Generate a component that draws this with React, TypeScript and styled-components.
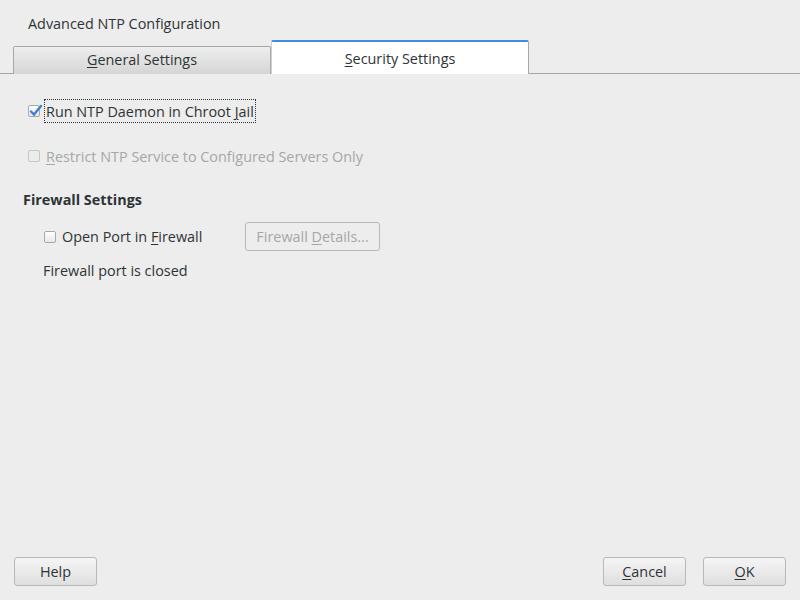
import React from 'react'
import styled, { createGlobalStyle } from 'styled-components'

const GlobalStyle = createGlobalStyle`
    html, body {
        margin: 0;
        padding: 0;
        background: #ededed;
    }
    body {
        font-family: "Open Sans", "DejaVu Sans", sans-serif;
        font-size: 14.4px;
        color: #2e3436;
    }
`

const Dialog = styled.div`
    width: 800px;
    height: 600px;
    box-sizing: border-box;
    display: flex;
    flex-direction: column;
`

const Title = styled.div`
    padding: 15px 0 0 28px;
    height: 24px;
    line-height: 18px;
`

const TabBar = styled.div`
    display: flex;
    align-items: flex-end;
    height: 34px;
    padding-left: 13px;
    border-bottom: 1px solid #a8a8a8;
`

const Tab = styled.div<{ $active?: boolean }>`
    width: 258px;
    box-sizing: border-box;
    text-align: center;
    height: ${p => (p.$active ? 34 : 28)}px;
    line-height: ${p => (p.$active ? 34 : 25)}px;
    margin-bottom: -1px;
    border: 1px solid #a8a8a8;
    border-bottom: none;
    border-radius: 2px 2px 0 0;
    background: ${p => (p.$active ? '#ffffff' : 'linear-gradient(#efeeef, #d5d5d5)')};
    ${p => p.$active && 'border-top: 2px solid #3d8ee0; border-left-color: #d0d0d0;'}
`

const Mnemonic = styled.span`
    text-decoration: underline;
    text-underline-offset: 2px;
`

const Content = styled.div`
    flex: 1;
    display: flex;
    flex-direction: column;
    padding: 25px 0 0 23px;
`

const CheckRow = styled.label<{ $disabled?: boolean; $indent?: number }>`
    display: flex;
    align-items: center;
    gap: 6px;
    height: 24px;
    margin-left: ${p => p.$indent ?? 5}px;
    color: ${p => (p.$disabled ? '#a5a7a8' : '#2e3436')};
`

const Box = styled.span<{ $disabled?: boolean }>`
    width: 12px;
    height: 12px;
    box-sizing: border-box;
    border: 1px solid ${p => (p.$disabled ? '#c4c6c2' : '#a8aaa7')};
    border-radius: 2px;
    background: ${p => (p.$disabled ? '#ececec' : 'linear-gradient(#ffffff, #e8e8e8)')};
    position: relative;
    flex-shrink: 0;
`

const Tick = styled.svg`
    position: absolute;
    left: 0px;
    top: -2px;
`

const Focused = styled.span`
    outline: 1px dotted #2e3436;
    padding: 2px 1px 1px 1px;
    margin-left: -1px;
`

const Section = styled.div`
    font-weight: 700;
    margin-top: 22px;
    height: 20px;
`

const FirewallRow = styled.div`
    display: flex;
    align-items: center;
    margin-top: 12px;
    gap: 43px;
`

const Button = styled.button<{ $disabled?: boolean }>`
    font-family: inherit;
    font-size: 14.4px;
    height: 29px;
    min-width: 83px;
    padding: 0 10px;
    border: 1px solid #b8b8b8;
    border-radius: 3px;
    color: ${p => (p.$disabled ? '#a5a7a8' : '#2e3436')};
    background: ${p => (p.$disabled ? '#ededed' : 'linear-gradient(#f6f5f6, #e0dfe0)')};
`

const Status = styled.div`
    margin: 10px 0 0 20px;
`

const Footer = styled.div`
    display: flex;
    justify-content: space-between;
    padding: 0 14px 14px 14px;
`

const Right = styled.div`
    display: flex;
    gap: 17px;
`

const Check = ({ checked, disabled }: { checked?: boolean; disabled?: boolean }) => (
    <Box $disabled={disabled}>
        {checked && (
            <Tick width="14" height="13" viewBox="0 0 14 13">
                <path d="M2 7.5 L5 10.5 L12 2" stroke="#3d7fd0" strokeWidth="2.4" fill="none" strokeLinecap="round" />
            </Tick>
        )}
    </Box>
)

export default function App() {
    return (
        <Dialog>
            <GlobalStyle />
            <Title>Advanced NTP Configuration</Title>
            <TabBar>
                <Tab><Mnemonic>G</Mnemonic>eneral Settings</Tab>
                <Tab $active><Mnemonic>S</Mnemonic>ecurity Settings</Tab>
            </TabBar>
            <Content>
                <CheckRow>
                    <Check checked />
                    <Focused>Run NTP Daemon in Chroot <Mnemonic>J</Mnemonic>ail</Focused>
                </CheckRow>
                <CheckRow $disabled style={{ marginTop: 21 }}>
                    <Check disabled />
                    <span><Mnemonic>R</Mnemonic>estrict NTP Service to Configured Servers Only</span>
                </CheckRow>
                <Section>Firewall Settings</Section>
                <FirewallRow>
                    <CheckRow $indent={21}>
                        <Check />
                        <span>Open Port in <Mnemonic>F</Mnemonic>irewall</span>
                    </CheckRow>
                    <Button $disabled>Firewall <Mnemonic>D</Mnemonic>etails...</Button>
                </FirewallRow>
                <Status>Firewall port is closed</Status>
            </Content>
            <Footer>
                <Button>Help</Button>
                <Right>
                    <Button><Mnemonic>C</Mnemonic>ancel</Button>
                    <Button><Mnemonic>O</Mnemonic>K</Button>
                </Right>
            </Footer>
        </Dialog>
    )
}
